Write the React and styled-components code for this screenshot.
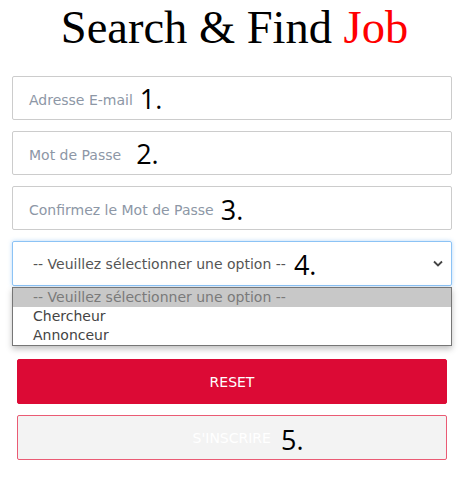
import React from 'react';
import styled, { createGlobalStyle } from 'styled-components';

const Global = createGlobalStyle`
  body {
    margin: 0;
    background: #fff;
    font-family: "DejaVu Sans", "Noto Sans", sans-serif;
  }
`;

const Page = styled.div`
  width: 469px;
`;

const Title = styled.h1`
  margin: 0 0 21px;
  font-family: "Liberation Serif", serif;
  font-weight: normal;
  font-size: 46.5px;
  line-height: 55px;
  text-align: center;
  color: #000;
  span {
    color: #ff0000;
  }
`;

const Form = styled.form`
  margin: 0 17px 0 12px;
  display: flex;
  flex-direction: column;
  gap: 11px;
`;

const Field = styled.div`
  height: 44px;
  box-sizing: border-box;
  border: 1px solid #cccccc;
  border-radius: 2px;
  padding: 0 16px;
  display: flex;
  align-items: center;
  gap: 7px;
`;

const Placeholder = styled.span`
  font-size: 14px;
  color: #8d97a6;
  padding-top: 3px;
`;

const Mark = styled.span`
  font-family: "Open Sans", sans-serif;
  font-size: 27px;
  color: #000;
  line-height: 1;
  padding-top: ${p => p.$drop || 0}px;
`;

const SelectWrap = styled.div`
  position: relative;
  margin-bottom: 62px;
`;

const Select = styled.div`
  height: 45px;
  box-sizing: border-box;
  border: 1px solid #8cc3f5;
  border-radius: 2px;
  box-shadow: 0 0 4px rgba(100, 170, 240, 0.45);
  padding: 0 8px 0 20px;
  display: flex;
  align-items: center;
  gap: 8px;
  font-size: 14px;
  color: #555;
  svg {
    margin-left: auto;
  }
`;

const List = styled.ul`
  position: absolute;
  top: 46px;
  left: 0;
  right: 0;
  margin: 0;
  padding: 0;
  list-style: none;
  background: #fff;
  border: 1px solid #767676;
  box-shadow: 0 3px 6px rgba(0, 0, 0, 0.25);
`;

const Option = styled.li`
  height: 19px;
  line-height: 19px;
  padding-left: 20px;
  font-size: 14px;
  color: ${p => (p.$active ? '#7a7a7a' : '#444')};
  background: ${p => (p.$active ? '#c8c8c8' : 'transparent')};
`;

const Button = styled.div`
  margin: 0 5px;
  height: 45px;
  box-sizing: border-box;
  border-radius: 2px;
  padding-left: ${p => p.$shift || 0}px;
  display: flex;
  align-items: center;
  justify-content: center;
  gap: 10px;
  font-size: 14px;
  color: #fff;
  text-transform: uppercase;
  background: ${p => (p.$primary ? '#dc0a35' : '#f3f3f3')};
  border: 1px solid ${p => (p.$primary ? '#dc0a35' : '#ea5b74')};
`;

function Chevron() {
  return (
    <svg width="10" height="7" viewBox="0 0 10 7">
      <path d="M1 1.5 L5 5.5 L9 1.5" fill="none" stroke="#444" strokeWidth="1.8" />
    </svg>
  );
}

export default function App() {
  return (
    <Page>
      <Global />
      <Title>
        Search &amp; Find <span>Job</span>
      </Title>
      <Form>
        <Field>
          <Placeholder>Adresse E-mail</Placeholder>
          <Mark>1.</Mark>
        </Field>
        <Field>
          <Placeholder>Mot de Passe</Placeholder>
          <Mark style={{ marginLeft: 8 }}>2.</Mark>
        </Field>
        <Field>
          <Placeholder>Confirmez le Mot de Passe</Placeholder>
          <Mark $drop={2}>3.</Mark>
        </Field>
        <SelectWrap>
          <Select>
            <span>-- Veuillez sélectionner une option --</span>
            <Mark $drop={2}>4.</Mark>
            <Chevron />
          </Select>
          <List>
            <Option $active>-- Veuillez sélectionner une option --</Option>
            <Option>Chercheur</Option>
            <Option>Annonceur</Option>
          </List>
        </SelectWrap>
        <Button $primary>Reset</Button>
        <Button $shift={32}>
          S'inscrire
          <Mark $drop={4}>5.</Mark>
        </Button>
      </Form>
    </Page>
  );
}
